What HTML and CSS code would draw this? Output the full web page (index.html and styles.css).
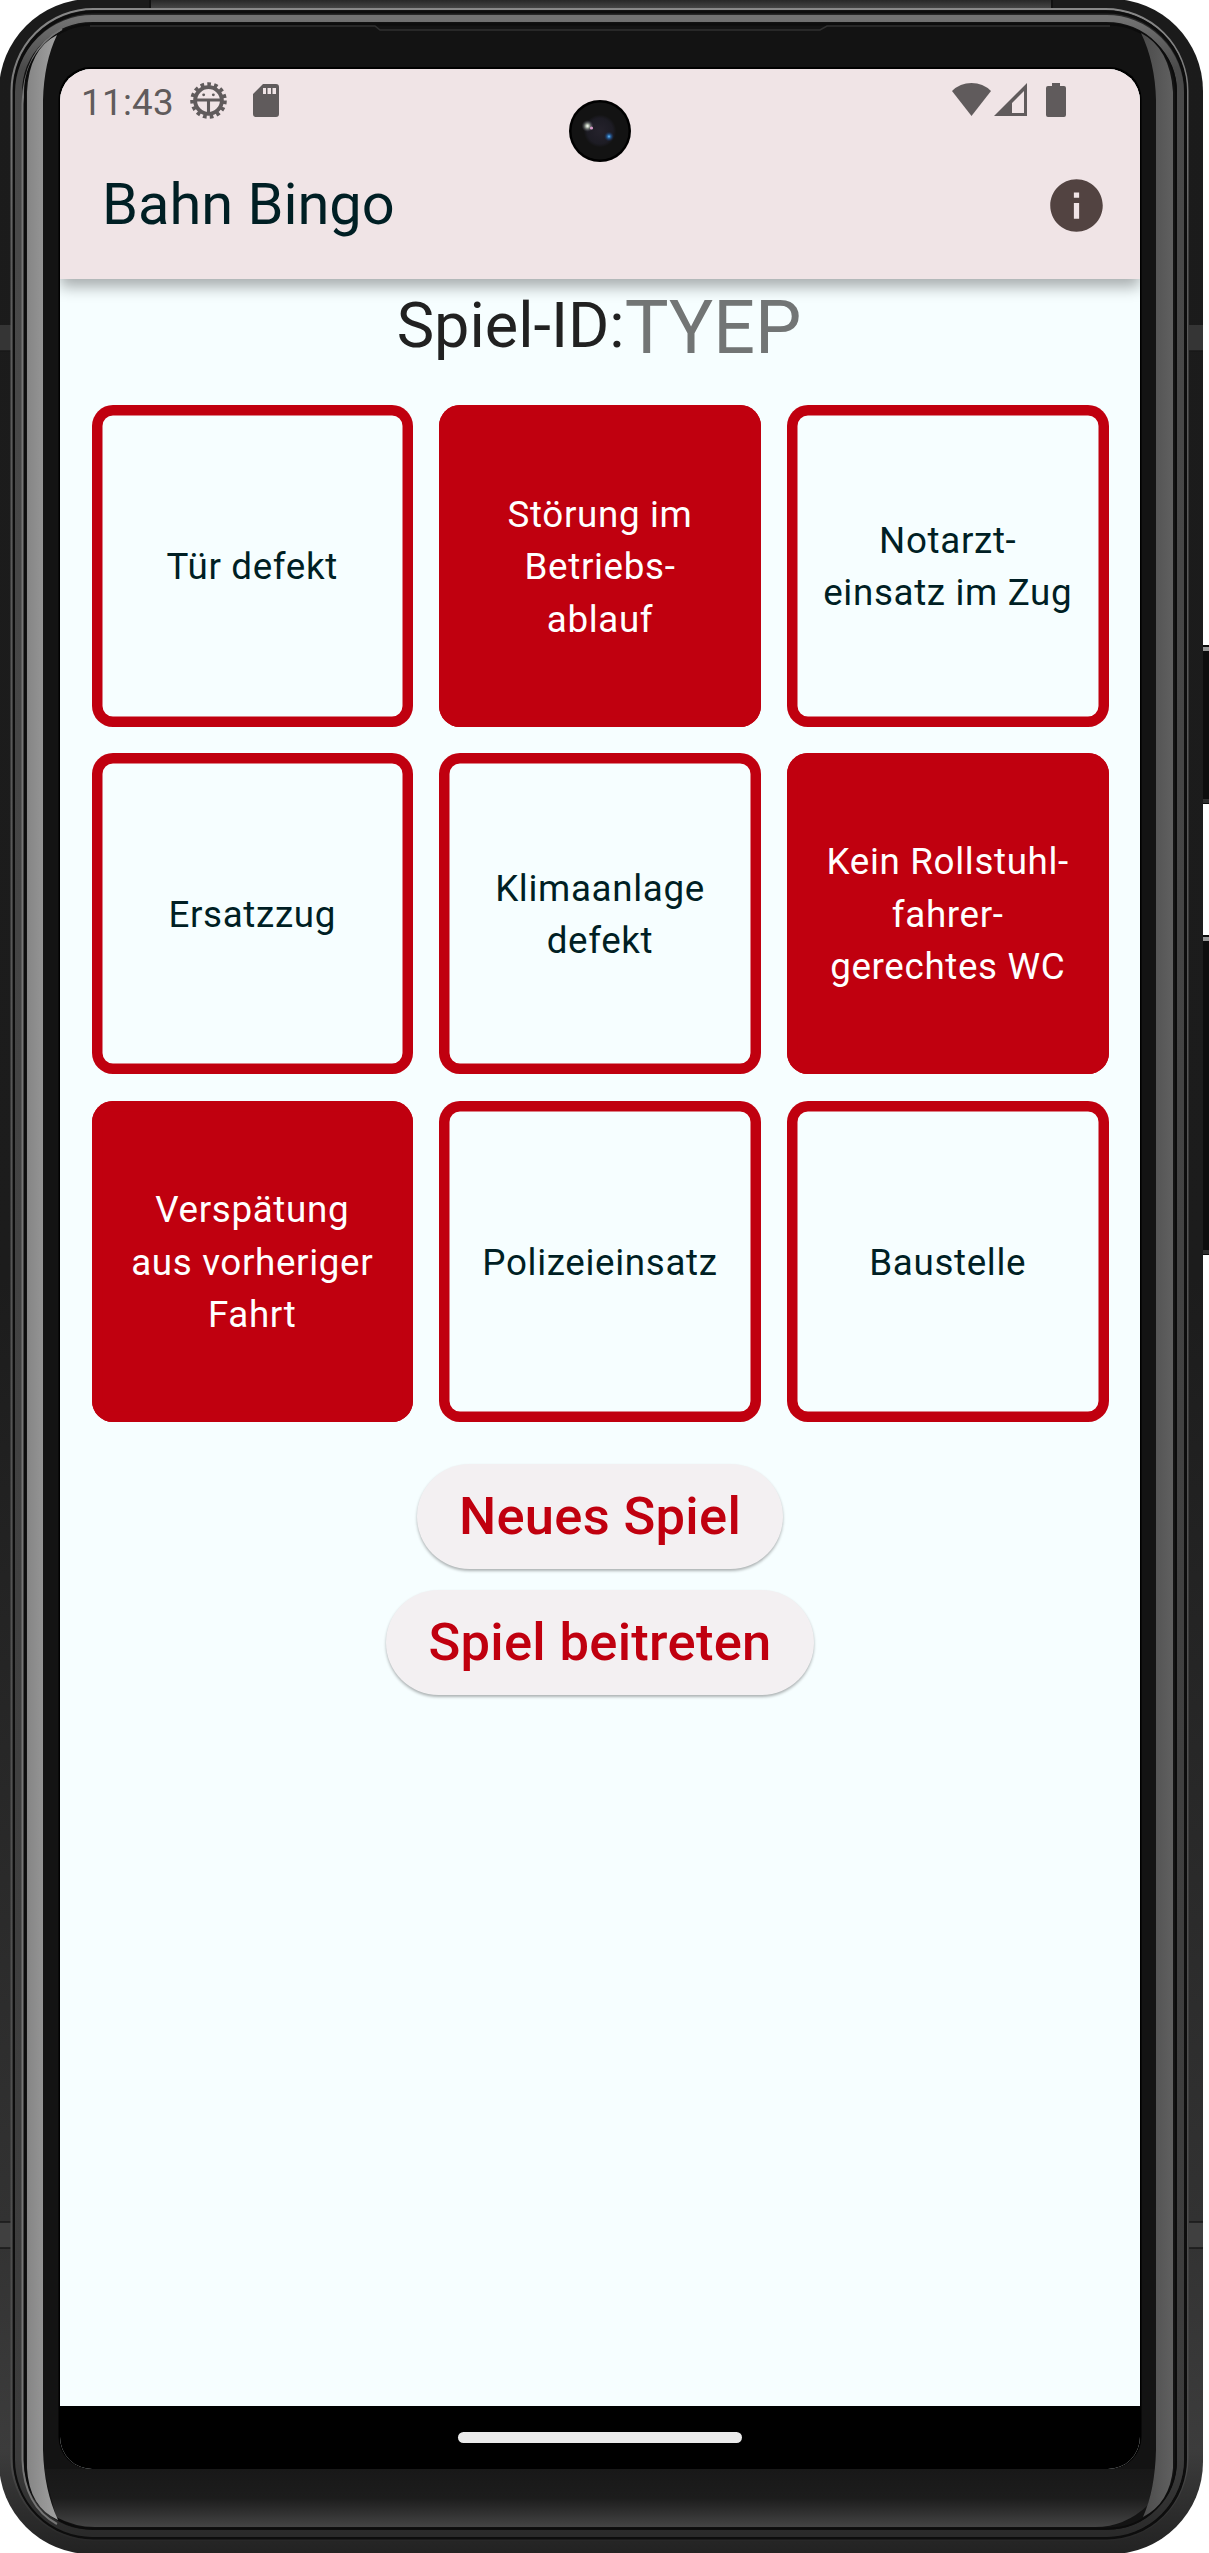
FILE: index.html
```html
<!DOCTYPE html>
<html lang="de">
<head>
<meta charset="utf-8">
<title>Bahn Bingo</title>
<link rel="stylesheet" href="styles.css">
</head>
<body>
<div class="phone">
  <svg class="frame" viewBox="0 0 1209 2553" aria-hidden="true">
    <defs>
      <linearGradient id="body" x1="0" y1="0" x2="0" y2="1">
        <stop offset="0" stop-color="#1b1b1b"/><stop offset=".5" stop-color="#1c1c1c"/>
        <stop offset=".87" stop-color="#323232"/><stop offset=".96" stop-color="#3c3c3c"/><stop offset="1" stop-color="#222"/>
      </linearGradient>
      <linearGradient id="ring" x1="0" y1="0" x2="0" y2="1">
        <stop offset="0" stop-color="#727272"/><stop offset=".02" stop-color="#4a4a4a"/>
        <stop offset=".97" stop-color="#3c3c3c"/><stop offset="1" stop-color="#2a2a2a"/>
      </linearGradient>
      <linearGradient id="hair" x1="0" y1="0" x2="0" y2="1">
        <stop offset="0" stop-color="#888"/><stop offset=".1" stop-color="#5c5c5c"/>
        <stop offset=".97" stop-color="#4c4c4c"/><stop offset="1" stop-color="#282828"/>
      </linearGradient>
      <linearGradient id="gleamL"><stop offset="0" stop-color="#858585"/><stop offset="1" stop-color="#a2a2a2"/></linearGradient>
      <linearGradient id="gleamR"><stop offset="0" stop-color="#4b4b4b"/><stop offset="1" stop-color="#606060"/></linearGradient>
      <linearGradient id="topEdge" x1="0" y1="0" x2="0" y2="1"><stop offset="0" stop-color="#282828"/><stop offset="1" stop-color="#454545"/></linearGradient>
      <linearGradient id="chin" x1="0" y1="0" x2="0" y2="1"><stop offset="0" stop-color="#181818"/><stop offset=".5" stop-color="#1c1c1c"/><stop offset="1" stop-color="#444"/></linearGradient>
    </defs>
    <!-- side keys -->
    <rect x="1198" y="645" width="14" height="159" rx="3" fill="#0d0d0d"/>
    <rect x="1203" y="636" width="6" height="0" fill="#999"/>
    <rect x="1203" y="647" width="6" height="4" fill="#999"/>
    <rect x="1198" y="935" width="14" height="320" rx="3" fill="#0d0d0d"/>
    <rect x="1203" y="937" width="6" height="4" fill="#999"/>
    <path d="M1202 799h7v4h-7zM1202 1250h7v4h-7z" fill="#303030"/>
    <!-- metal shell -->
    <rect x="-1" y="-1" width="1204" height="2555" rx="92" fill="url(#body)"/>
    <rect x="150" y="0" width="902" height="8" fill="url(#topEdge)"/>
    <path d="M150 0V8M1052 0V10" stroke="#111" stroke-width="2"/>
    <path d="M0 325h11v26H0zM1189 325h14v26h-14z" fill="#353535"/>
    <path d="M0 2222h11v26H0zM1189 2222h14v26h-14z" fill="#404040"/>
    <path d="M0 351h11M1189 351h14M0 2248h11M1189 2248h14M0 2222h11M1189 2222h14" stroke="#191919" stroke-width="1.5"/>
    <!-- layered rim -->
    <rect x="11.5" y="9" width="1176" height="2531" rx="82" fill="#1b1b1b" stroke="url(#hair)" stroke-width="2"/>
    <rect x="14.500" y="12" width="1171" height="2526" rx="79" fill="#282828" stroke="#0d0d0d" stroke-width="3"/>
    <rect x="18.500" y="18.500" width="1162" height="2515" rx="74" fill="#111" stroke="url(#ring)" stroke-width="7"/>
    <path d="M57 2524Q24 2506 22.500 2460V104Q24 50 62 29" fill="none" stroke="#757575" stroke-width="2"/>
    <rect x="25" y="24.500" width="1151" height="2504" rx="68" fill="#131313" stroke="#0c0c0c" stroke-width="2"/>
    <path d="M44 2469H1156L1148 2505Q1125 2527 1095 2527H95Q75 2527 56 2517Z" fill="url(#chin)"/>
    <path d="M90 26H375L380 30H820L827 26H1110" fill="none" stroke="#303030" stroke-width="1.500"/>
    <path d="M27 2468V92Q29 49 57 35Q44 62 43 100V2450Q44 2490 58 2520Q29 2507 27 2468Z" fill="url(#gleamL)"/>
    <path d="M1173 2468V92Q1170 48 1141 33Q1155 62 1156 100V2450Q1155 2490 1143 2517Q1170 2503 1173 2468Z" fill="url(#gleamR)"/>
    <rect x="58.500" y="67" width="1083" height="2402" rx="32" fill="#000"/>
  </svg>

  <div class="screen">
    <div class="status">
      <span class="time">11:43</span>
      <svg class="gear" viewBox="0 0 36 36">
        <circle cx="18" cy="18" r="13" fill="none" stroke="currentColor" stroke-width="3.800"/>
        <circle cx="18" cy="18" r="16" fill="none" stroke="currentColor" stroke-width="3.600" stroke-dasharray="3.600 3.102"/>
        <path d="M6 17.500H30M18 18V30" stroke="currentColor" stroke-width="3"/>
        <circle cx="13.300" cy="12.500" r="1.400" fill="currentColor"/><circle cx="22.700" cy="12.500" r="1.400" fill="currentColor"/>
      </svg>
      <svg class="sd" viewBox="0 0 26 33"><path fill="currentColor" fill-rule="evenodd" d="M10 0H23Q26 0 26 3V30Q26 33 23 33H3Q0 33 0 30V10ZM10 4V10H13V4ZM14.500 4V10H18V4ZM19.500 4V10H23V4Z"/></svg>
      <span class="spacer"></span>
      <svg class="wifi" viewBox="0 0 39 33"><path fill="currentColor" d="M0 8Q8 0 19.500 0T39 8L19.500 33Z"/></svg>
      <svg class="signal" viewBox="0 0 33 33"><path fill="currentColor" fill-rule="evenodd" d="M33 0V33H0ZM30 8L18 20V30H30Z"/></svg>
      <svg class="battery" viewBox="0 0 20 34"><path fill="currentColor" d="M6 0H14V3H18Q20 3 20 5V32Q20 34 18 34H2Q0 34 0 32V5Q0 3 2 3H6Z"/></svg>
    </div>
    <header class="appbar">
      <h1 class="title">Bahn Bingo</h1>
      <svg class="info" viewBox="0 0 24 24"><path fill="currentColor" d="M12 2C6.480 2 2 6.480 2 12s4.480 10 10 10 10-4.480 10-10S17.520 2 12 2zm1 15h-2v-6h2v6zm0-8h-2V7h2v2z"/></svg>
    </header>
    <main class="content">
      <div class="game-id"><span class="label">Spiel-ID:</span><span class="code">TYEP</span></div>
      <div class="grid">
        <div class="cell">Tür defekt</div>
        <div class="cell on">Störung im<br>Betriebs-<br>ablauf</div>
        <div class="cell">Notarzt-<br>einsatz im Zug</div>
        <div class="cell">Ersatzzug</div>
        <div class="cell">Klimaanlage<br>defekt</div>
        <div class="cell on">Kein Rollstuhl-<br>fahrer-<br>gerechtes WC</div>
        <div class="cell on">Verspätung<br>aus vorheriger<br>Fahrt</div>
        <div class="cell">Polizeieinsatz</div>
        <div class="cell">Baustelle</div>
      </div>
      <div class="actions">
        <button class="btn">Neues Spiel</button>
        <button class="btn">Spiel beitreten</button>
      </div>
    </main>
    <nav class="navbar"><span class="handle"></span></nav>
  </div>

  <svg class="camera" viewBox="0 0 62 62" aria-hidden="true">
    <defs>
      <radialGradient id="lens"><stop offset="0" stop-color="#25222c"/><stop offset=".8" stop-color="#1d1c24"/><stop offset="1" stop-color="#141415"/></radialGradient>
      <radialGradient id="flare"><stop offset="0" stop-color="#fff"/><stop offset=".25" stop-color="#b9c4b4"/><stop offset="1" stop-color="#445" stop-opacity="0"/></radialGradient>
      <radialGradient id="spark"><stop offset="0" stop-color="#6cc0ff"/><stop offset=".3" stop-color="#2a6aa8"/><stop offset="1" stop-color="#1a2a55" stop-opacity="0"/></radialGradient>
    </defs>
    <circle cx="31" cy="31" r="31" fill="#000"/><circle cx="31" cy="31" r="28.500" fill="#131313"/>
    <circle cx="31" cy="31" r="16" fill="url(#lens)"/>
    <circle cx="18.500" cy="26" r="6" fill="url(#flare)"/><circle cx="22.500" cy="28" r="1.600" fill="#d79ac8"/>
    <circle cx="40" cy="36.500" r="5" fill="url(#spark)"/>
  </svg>
</div>
</body>
</html>
```
FILE: styles.css
```css
* { box-sizing: border-box; }
body { margin: 0; background: #fff; font-family: Roboto, "Liberation Sans", sans-serif; }
svg { display: block; flex: none; }

.phone { position: relative; width: 1209px; height: 2553px; padding: 69px 0 0 60px; overflow: hidden; }
.frame { position: absolute; left: 0; top: 0; width: 1209px; height: 2553px; }
.camera { position: absolute; z-index: 2; left: 569px; top: 100px; width: 62px; height: 62px; }

.screen {
  position: relative; width: 1080px; height: 2400px; overflow: hidden;
  display: flex; flex-direction: column; border-radius: 32px; background: #f6feff;
}
.status {
  height: 63px; padding: 0 74px 0 21px; display: flex; align-items: flex-start;
  background: #f0e4e6; color: #605b5c; position: relative; z-index: 1;
}
.time { font-size: 36.75px; line-height: 43px; letter-spacing: .3px; margin-top: 12px; width: 108.5px; white-space: nowrap; }
.gear { width: 37px; height: 37px; margin-top: 13px; }
.sd { width: 26px; height: 33px; margin: 15px 0 0 26px; }
.spacer { flex: 1; }
.wifi { width: 39px; height: 33px; margin-top: 14px; }
.signal { width: 33px; height: 33px; margin: 14px 0 0 3px; }
.battery { width: 20px; height: 34px; margin: 14px 0 0 19px; }

.appbar {
  height: 147px; flex: none; padding: 0 32px 0 42px; display: flex; align-items: center; justify-content: space-between;
  background: #f0e4e6; box-shadow: 0 8px 14px rgba(0, 0, 0, .32);
}
.title { margin: 0 0 2px; font-size: 57.75px; font-weight: 400; line-height: 73px; color: #001f24; }
.info { width: 63px; height: 63px; color: #524341; }

.content { flex: 1; display: flex; flex-direction: column; align-items: center; }
.game-id { height: 96px; margin: 0 2px 30px 0; display: flex; justify-content: center; align-items: center; }
.label { font-size: 63px; line-height: 84px; color: #212121; margin-top: -3px; }
.code { font-size: 73.5px; line-height: 86px; color: #727575; margin-top: 2px; }

.grid { width: 1017px; display: grid; grid-template-columns: repeat(3, 1fr); grid-auto-rows: 321.5px; gap: 26.25px; }
.cell {
  display: flex; align-items: center; justify-content: center; text-align: center; padding-top: 3px;
  font-size: 36.75px; line-height: 52.5px; letter-spacing: .656px; white-space: nowrap;
  color: #001f24; border-radius: 21px; box-shadow: inset 0 0 0 10.5px #c0000f;
}
.on { background: #c0000f; color: #fff; }

.actions { margin-top: 42px; display: flex; flex-direction: column; align-items: center; gap: 21px; }
.btn {
  height: 105px; padding: 0 42px; border: 0; border-radius: 53px; background: #f3f0f2; color: #c0000f;
  font: 500 52.5px/63px Roboto, "Liberation Sans", sans-serif; letter-spacing: .3px;
  box-shadow: 0 2px 3px rgba(0, 0, 0, .3);
}

.navbar { height: 63px; flex: none; background: #000; display: flex; align-items: center; justify-content: center; }
.handle { width: 284px; height: 11px; border-radius: 6px; background: #ebebeb; }
```
